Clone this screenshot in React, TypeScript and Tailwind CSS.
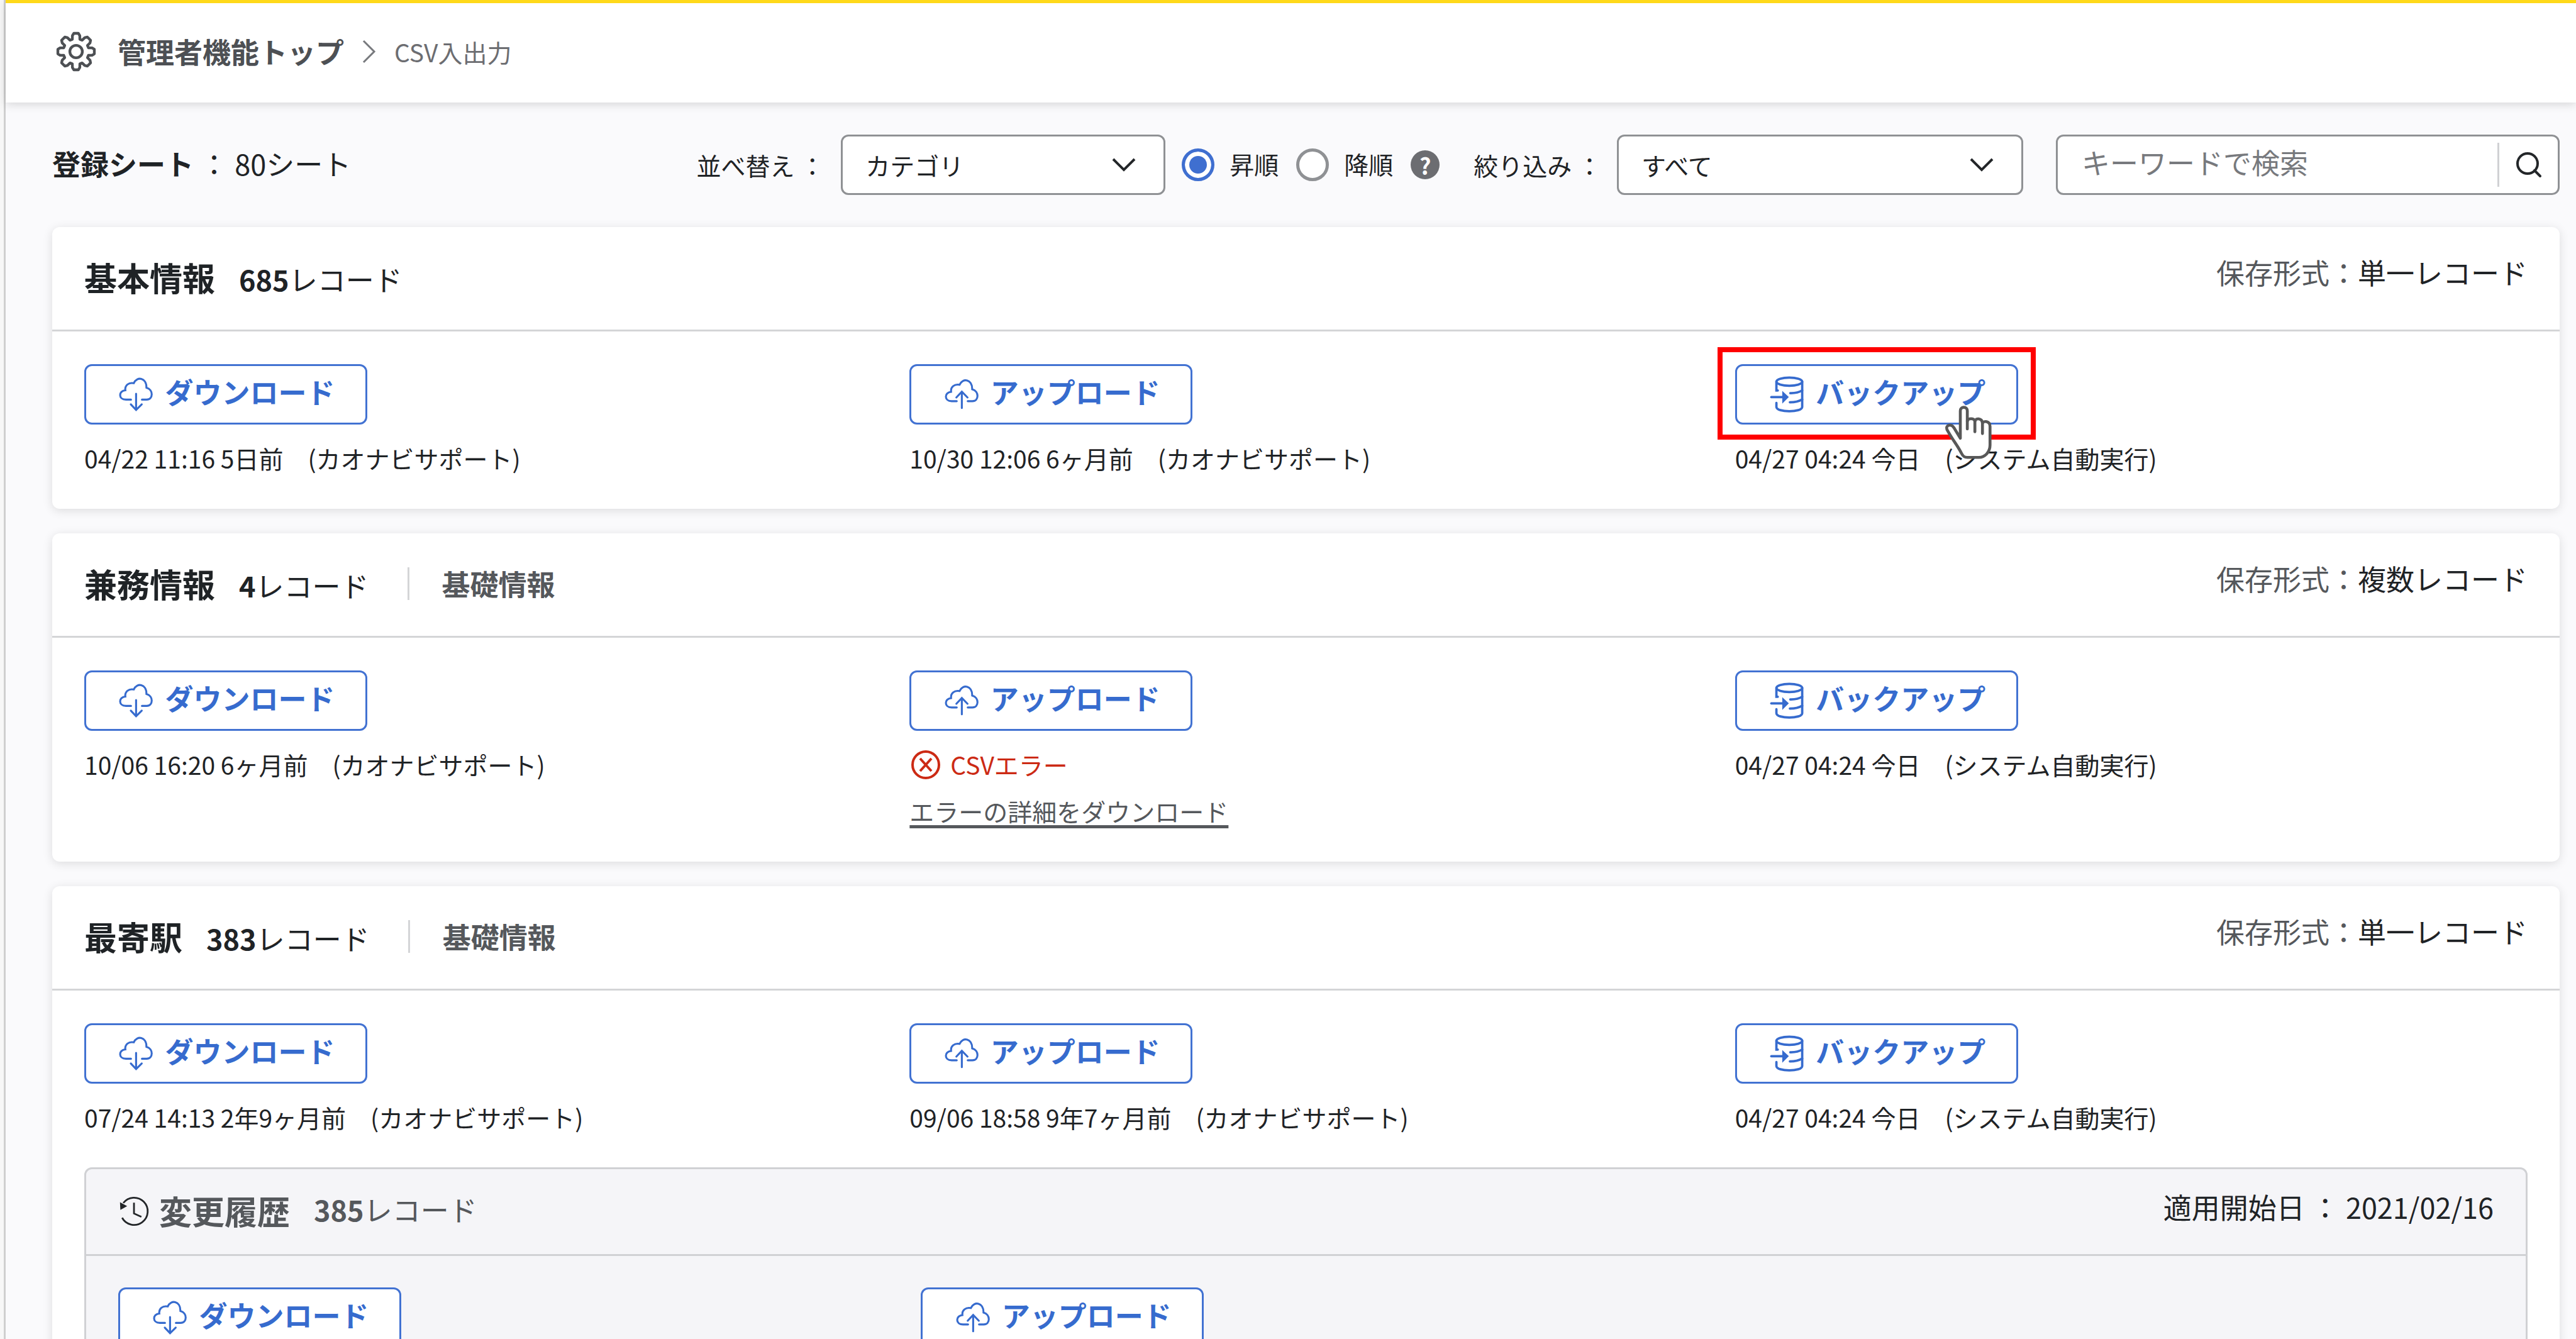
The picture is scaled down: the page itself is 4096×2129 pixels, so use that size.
import type { ReactNode } from "react"

type ActionKind = "download" | "upload" | "backup"

type Action = {
  kind: ActionKind
  note?: string
  error?: boolean
  highlight?: boolean
}

type Sheet = {
  name: string
  count: number
  group?: string
  format: string
  actions: Action[]
  history?: { count: number; startDate: string }
}

const sheets: Sheet[] = [
  {
    name: "基本情報",
    count: 685,
    format: "単一レコード",
    actions: [
      { kind: "download", note: "04/22 11:16 5日前　(カオナビサポート)" },
      { kind: "upload", note: "10/30 12:06 6ヶ月前　(カオナビサポート)" },
      { kind: "backup", note: "04/27 04:24 今日　(システム自動実行)", highlight: true },
    ],
  },
  {
    name: "兼務情報",
    count: 4,
    group: "基礎情報",
    format: "複数レコード",
    actions: [
      { kind: "download", note: "10/06 16:20 6ヶ月前　(カオナビサポート)" },
      { kind: "upload", error: true },
      { kind: "backup", note: "04/27 04:24 今日　(システム自動実行)" },
    ],
  },
  {
    name: "最寄駅",
    count: 383,
    group: "基礎情報",
    format: "単一レコード",
    actions: [
      { kind: "download", note: "07/24 14:13 2年9ヶ月前　(カオナビサポート)" },
      { kind: "upload", note: "09/06 18:58 9年7ヶ月前　(カオナビサポート)" },
      { kind: "backup", note: "04/27 04:24 今日　(システム自動実行)" },
    ],
    history: { count: 385, startDate: "2021/02/16" },
  },
]

const labels: Record<ActionKind, string> = {
  download: "ダウンロード",
  upload: "アップロード",
  backup: "バックアップ",
}

// Outline of an eight-toothed gear around the origin
const gearPath =
  Array.from({ length: 8 }, (_, i) => {
    const corners = [
      [66, -17],
      [84, -13],
      [94, -7],
      [94, 7],
      [84, 13],
      [66, 17],
    ]
    return corners
      .map(([r, deg], j) => {
        const a = ((i * 45 + deg - 90) * Math.PI) / 180
        return `${i + j === 0 ? "M" : "L"}${(r * Math.cos(a)).toFixed(1)} ${(r * Math.sin(a)).toFixed(1)}`
      })
      .join("")
  }).join("") + "Z"

function GearIcon() {
  return (
    <svg viewBox="-103 -103 206 206" className="size-16 text-[#4d5054]" fill="none" stroke="currentColor" strokeWidth="14" strokeLinejoin="round">
      <path d={gearPath} />
      <circle r="32" />
    </svg>
  )
}

const cloudPath = "M92 155H66C26 155 28 110 63 107C60 82 80 66 106 71C122 34 172 42 171 94C208 104 206 155 172 155H148"

function ActionIcon({ kind }: { kind: ActionKind }) {
  if (kind === "download") {
    return (
      <svg viewBox="17 25 206 206" className="size-16" fill="none" stroke="currentColor" strokeWidth="10" strokeLinecap="round">
        <path d={cloudPath} />
        <path d="M118 125V206M91 179L118 208L147 179" />
      </svg>
    )
  }
  if (kind === "upload") {
    return (
      <svg viewBox="17 17 206 206" className="size-16" fill="none" stroke="currentColor" strokeWidth="10" strokeLinecap="round">
        <path d={cloudPath} />
        <path d="M118 190V107M90 136L118 106L147 136" />
      </svg>
    )
  }
  return (
    <svg viewBox="50 55 206 206" className="size-16" fill="none" stroke="currentColor" strokeWidth="12" strokeLinecap="round">
      <ellipse cx="163" cy="93" rx="66" ry="21" />
      <path d="M97 93V138H104M97 202V222C97 252 229 252 229 222V93" />
      <path d="M168 152Q205 153 229 138M166 199Q205 198 229 184" />
      <path d="M71 172H135" />
      <path d="M133 154L152 172L133 191Z" fill="currentColor" />
    </svg>
  )
}

function HistoryIcon() {
  return (
    <svg viewBox="24 38 165 165" className="size-[51px] text-[#232629]" fill="none" stroke="currentColor" strokeWidth="9">
      <path d="M44 152A70 70 0 1 0 50 76" />
      <path d="M105 74V130L143 147" />
      <path d="M33 72L35 112L70 92Z" fill="currentColor" stroke="none" />
    </svg>
  )
}

function SearchIcon() {
  return (
    <svg viewBox="0 0 42 42" className="size-[42px] text-[#232629]" fill="none" stroke="currentColor" strokeWidth="4" strokeLinecap="round">
      <circle cx="19" cy="19" r="16" />
      <path d="M30 30L39 39" />
    </svg>
  )
}

function HandPointer() {
  return (
    <svg viewBox="0 0 84 95" className="absolute left-[332px] top-16 z-10 h-[88px] w-[78px]" fill="none" stroke="#585858" strokeWidth="5" strokeLinecap="round" strokeLinejoin="round">
      <path
        fill="#fff"
        d="M28 58V11C28 3 40 3 40 11V29C41 23 52 23 53 29C54 23 65 23 66 32C68 28 79 28 79 38V70C79 82 70 91 60 91H40C34 91 32 88 30 84C23 70 16 63 5 43C2 35 13 33 17 40Z"
      />
      <path d="M40 28V42M53 29V47M66 32V50" />
    </svg>
  )
}

function ActionButton({ kind }: { kind: ActionKind }) {
  return (
    <button className="flex h-24 w-[450px] items-center justify-center gap-[13px] rounded-xl border-3 border-[#4272d2] bg-white text-[#366bce]">
      <ActionIcon kind={kind} />
      <span className="pb-2 text-[45px] leading-[64px] font-bold">{labels[kind]}</span>
    </button>
  )
}

function ActionCell({ action }: { action: Action }) {
  return (
    <div className="text-[39px] leading-[58px]">
      <div className="relative w-fit">
        <ActionButton kind={action.kind} />
        {action.highlight && (
          <>
            <div className="absolute -inset-x-7 -top-[27px] -bottom-6 border-8 border-[#ff0000]" />
            <HandPointer />
          </>
        )}
      </div>
      {action.note && <p className="mt-6">{action.note}</p>}
      {action.error && (
        <>
          <p className="mt-6 flex items-center gap-[14px] text-[#cc2a14]">
            <svg viewBox="0 0 51 51" className="size-[51px]" fill="none" stroke="currentColor" strokeWidth="4">
              <circle cx="26" cy="26" r="21" />
              <path d="M17 16L35 36M35 16L17 36" />
            </svg>
            CSVエラー
          </p>
          <a href="#" className="mt-4 block w-fit text-[#55585c] underline decoration-[5px] underline-offset-[6px] [text-decoration-skip-ink:none]">
            エラーの詳細をダウンロード
          </a>
        </>
      )}
    </div>
  )
}

function SheetCard({ sheet }: { sheet: Sheet }) {
  return (
    <section className="rounded-xl bg-white shadow-[0_3px_16px_rgba(0,0,0,0.12)]">
      <header className="flex h-[166px] items-center justify-between border-b-3 border-[#d4d5d7] px-[51px]">
        <div className="flex items-center pb-1 text-[45px] leading-[64px]">
          <div className="flex items-baseline gap-[38px]">
            <h2 className="text-[52px] leading-[72px] font-bold">{sheet.name}</h2>
            <p>
              <b>{sheet.count}</b>レコード
            </p>
          </div>
          {sheet.group && <p className="ml-[61px] flex items-center gap-[52px] font-bold text-[#55585c] before:h-[52px] before:w-[3px] before:bg-[#d4d5d7]">{sheet.group}</p>}
        </div>
        <p className="pb-5 text-[45px] leading-[64px]">
          <span className="text-[#55585c]">保存形式：</span>
          {sheet.format}
        </p>
      </header>
      <div className="px-[51px] py-[52px]">
        <div className="grid grid-cols-3 gap-x-[52px]">
          {sheet.actions.map((action) => (
            <ActionCell key={action.kind} action={action} />
          ))}
        </div>
        {sheet.history && (
          <div className="mt-[51px] rounded-xl border-3 border-[#d0d1d4] bg-[#f5f5f8]">
            <div className="flex h-[138px] items-center justify-between border-b-3 border-[#d0d1d4] px-[51px] text-[45px] leading-[64px]">
              <div className="flex items-center text-[#55585c]">
                <HistoryIcon />
                <h3 className="ml-[14px] pb-1 text-[52px] leading-[72px] font-bold">変更履歴</h3>
                <p className="ml-[38px] pb-2">
                  <b>{sheet.history.count}</b>レコード
                </p>
              </div>
              <p className="pb-4">適用開始日 ： {sheet.history.startDate}</p>
            </div>
            <div className="grid grid-cols-3 gap-x-[52px] px-[51px] py-[50px]">
              <ActionButton kind="download" />
              <ActionButton kind="upload" />
            </div>
          </div>
        )}
      </div>
    </section>
  )
}

function SelectBox({ id, className, children }: { id: string; className: string; children: ReactNode }) {
  return (
    <div className={`relative ${className}`}>
      <select id={id} className="h-24 w-full appearance-none rounded-xl border-3 border-[#8f9194] bg-white pl-9 text-[39px]">
        {children}
      </select>
      <svg viewBox="0 0 40 24" className="pointer-events-none absolute top-9 right-[46px] h-6 w-10" fill="none" stroke="#232629" strokeWidth="4">
        <path d="M3 3L20 20L37 3" />
      </svg>
    </div>
  )
}

const radioClass =
  "size-[52px] appearance-none rounded-full border-5 border-[#8f9194] bg-white checked:border-[#3f6fd0] checked:bg-[#3f6fd0] checked:shadow-[inset_0_0_0_7px_white]"

function Toolbar() {
  return (
    <div className="flex items-center py-[51px]">
      <p className="pb-1 text-[45px] leading-[64px]">
        <b>登録シート</b> ： 80シート
      </p>
      <div className="ml-auto flex items-center text-[39px] leading-[58px]">
        <label htmlFor="sort">並べ替え ：</label>
        <SelectBox id="sort" className="ml-[26px] w-[516px]">
          <option>カテゴリ</option>
        </SelectBox>
        <label className="ml-[26px] flex items-center gap-6">
          <input type="radio" name="order" defaultChecked className={radioClass} />
          <span className="pb-1">昇順</span>
        </label>
        <label className="ml-7 flex items-center gap-6">
          <input type="radio" name="order" className={radioClass} />
          <span className="pb-1">降順</span>
        </label>
        <button aria-label="ヘルプ" className="ml-7 size-[46px] rounded-full bg-[#6c6d71] text-[36px] leading-[46px] font-bold text-white">
          ?
        </button>
        <label htmlFor="filter" className="ml-[54px]">
          絞り込み ：
        </label>
        <SelectBox id="filter" className="ml-6 w-[646px]">
          <option>すべて</option>
        </SelectBox>
        <div className="ml-[52px] flex h-24 w-[801px] items-center rounded-xl border-3 border-[#8f9194] bg-white">
          <input type="text" aria-label="キーワードで検索" placeholder="キーワードで検索" className="min-w-0 grow pb-2 pl-[38px] text-[45px] outline-none placeholder:text-[#77797d]" />
          <button aria-label="検索" className="flex h-[70px] w-24 items-center justify-center border-l-3 border-[#d0d1d4]">
            <SearchIcon />
          </button>
        </div>
      </div>
    </div>
  )
}

export default function App() {
  return (
    <div className="flex h-screen overflow-hidden bg-[#f7f7f7] pl-[6px] font-['Noto_Sans_CJK_JP',sans-serif] text-[#1f2326]">
      <div className="min-w-0 grow border-l-3 border-[#cfcfcf] bg-[#fafafc]">
        <header className="flex h-[163px] items-center border-t-5 border-[#ffd91a] bg-white pb-1 pl-20 shadow-[0_3px_14px_rgba(0,0,0,0.15)]">
          <GearIcon />
          <nav className="ml-[34px] flex items-center">
            <a href="#" className="text-[45px] leading-[64px] font-bold text-[#4d5054]">
              管理者機能トップ
            </a>
            <svg viewBox="0 0 24 40" className="ml-7 h-10 w-6" fill="none" stroke="#77797d" strokeWidth="3">
              <path d="M3 3L20 20L3 37" />
            </svg>
            <span className="ml-7 text-[39px] leading-[58px] text-[#6c6d71]">CSV入出力</span>
          </nav>
        </header>
        <main className="pr-[26px] pl-[74px]">
          <Toolbar />
          <div className="flex flex-col gap-[39px]">
            {sheets.map((sheet) => (
              <SheetCard key={sheet.name} sheet={sheet} />
            ))}
          </div>
        </main>
      </div>
    </div>
  )
}
